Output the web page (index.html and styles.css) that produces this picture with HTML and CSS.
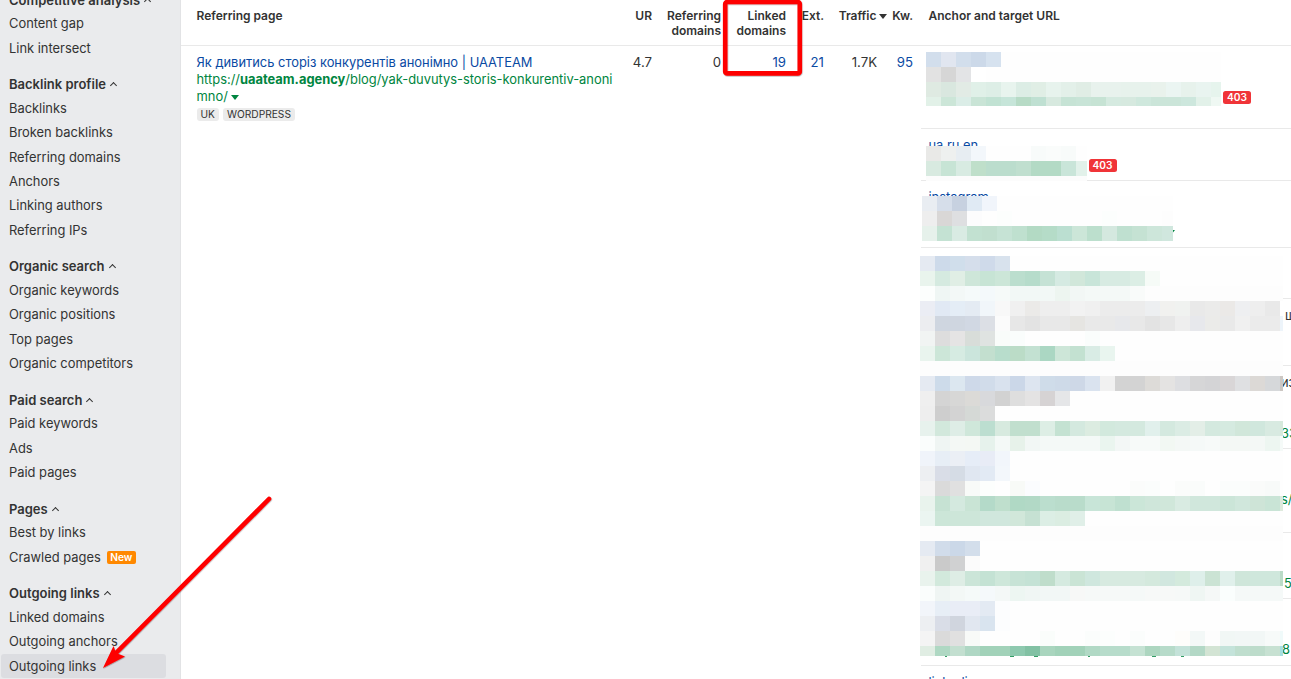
FILE: index.html
```html
<!DOCTYPE html>
<html lang="en">
<head>
    <meta charset="UTF-8">
    <meta name="viewport" content="width=device-width, initial-scale=1.0">
    <title>Outgoing links</title>
    <link rel="stylesheet" href="styles.css">
</head>
<body>

<div class="layout">
    <nav class="sidebar">
        <div class="group">
            <h4>Competitive analysis <i class="caret"></i></h4>
            <a>Content gap</a>
            <a>Link intersect</a>
        </div>
        <div class="group">
            <h4>Backlink profile <i class="caret"></i></h4>
            <a>Backlinks</a>
            <a>Broken backlinks</a>
            <a>Referring domains</a>
            <a>Anchors</a>
            <a>Linking authors</a>
            <a>Referring IPs</a>
        </div>
        <div class="group">
            <h4>Organic search <i class="caret"></i></h4>
            <a>Organic keywords</a>
            <a>Organic positions</a>
            <a>Top pages</a>
            <a>Organic competitors</a>
        </div>
        <div class="group">
            <h4>Paid search <i class="caret"></i></h4>
            <a>Paid keywords</a>
            <a>Ads</a>
            <a>Paid pages</a>
        </div>
        <div class="group">
            <h4>Pages <i class="caret"></i></h4>
            <a>Best by links</a>
            <a>Crawled pages <span class="new">New</span></a>
        </div>
        <div class="group">
            <h4>Outgoing links <i class="caret"></i></h4>
            <a>Linked domains</a>
            <a>Outgoing anchors</a>
            <a class="active">Outgoing links</a>
        </div>
    </nav>

    <main class="report">
        <div class="row head">
            <div class="page">Referring page</div>
            <div>UR</div>
            <div>Referring<br>domains</div>
            <div>Linked<br>domains</div>
            <div>Ext.</div>
            <div class="sorted">Traffic <i class="down"></i></div>
            <div>Kw.</div>
            <div class="anchor">Anchor and target URL</div>
        </div>
        <div class="row body">
            <div class="page">
                <div class="title">Як дивитись сторіз конкурентів анонімно | UAATEAM</div>
                <div class="url">https://<b>uaateam.agency</b>/blog/yak-duvutys-storis-konkurentiv-anoni<br>mno/ <i class="down green"></i></div>
                <div class="tags"><span>UK</span><span>WORDPRESS</span></div>
            </div>
            <div>4.7</div>
            <div>0</div>
            <div class="link">19</div>
            <div class="link">21</div>
            <div class="traffic">1.7K</div>
            <div class="link">95</div>
            <div class="targets">
                <div class="target t1"><span class="code">403</span></div>
                <div class="target t2"><span class="link">ua ru en</span><span class="code">403</span></div>
                <div class="target t3"><span class="link">instagram</span><i class="down green"></i></div>
                <div class="target t4"></div>
                <div class="target t5"><span class="tail">ш</span></div>
                <div class="target t6"><span class="tail">из</span><span class="tail url">33</span></div>
                <div class="target t7"><span class="tail url">s/</span></div>
                <div class="target t8"><span class="tail url">5</span></div>
                <div class="target t9"><span class="tail url">8</span></div>
                <div class="target t10"><span class="link">linkedin</span></div>
            </div>
        </div>
    </main>
</div>

<!-- hidden anchors and urls -->
<div class="mosaic m1" id="m1"></div>
<div class="mosaic m2" id="m2"></div>
<div class="mosaic m3" id="m3"></div>
<div class="mosaic m4" id="m4"></div>

<!-- annotations -->
<svg class="notes" width="1291" height="679" viewBox="0 0 1291 679">
    <defs>
        <filter id="shade" x="-5%" y="-5%" width="110%" height="110%">
            <feDropShadow dx="0.4" dy="0.6" stdDeviation="0.6" flood-color="#000" flood-opacity="0.4"/>
        </filter>
    </defs>
    <!-- letter tails left under the cover -->
    <path d="M945 656.5h2M1010 656.5h4M1034 656.5h4M1088 656.5h2M1152 656.5h4M1181 656.5h3" stroke="#008540" stroke-opacity="0.8"/>
    <g filter="url(#shade)">
        <rect x="725.2" y="2" width="74.6" height="71.4" rx="2" fill="none" stroke="#fe0606" stroke-width="4.6"/>
        <path d="M269 499 L115 654" fill="none" stroke="#fe0606" stroke-width="4.6" stroke-linecap="round"/>
        <path d="M103 668 L113.5 646 L116 653 L125 656.5 Z" fill="#fe0606"/>
    </g>
</svg>

<script src="mosaic.js"></script>
</body>
</html>
```

FILE: styles.css
```css
* {
    box-sizing: border-box;
}
body {
    margin: 0;
    width: 1291px;
    height: 679px;
    overflow: hidden;
    position: relative;
    background: #fff;
    color: #333;
    font-family: Inter, "Liberation Sans", sans-serif;
    font-size: 13.2px;
}
.layout {
    display: flex;
    height: 679px;
    overflow: hidden;
}

/* sidebar */
.sidebar {
    flex: 0 0 181px;
    background: #eaebed;
    border-right: 1px solid #e2e3e5;
    margin-top: -12.5px;
    height: 692px;
    overflow: hidden;
}
.group {
    margin-bottom: 11.67px;
}
.group h4,
.group a {
    display: flex;
    align-items: center;
    height: 24.33px;
    margin: 0 14px 0 1px;
    padding-left: 8px;
    font-size: 12.9px;
    white-space: nowrap;
}
.group h4 {
    font-size: 13px;
    font-weight: 600;
}
.group a.active {
    background: #dcdde1;
    border-radius: 3px;
}
.caret {
    width: 5px;
    height: 5px;
    margin: 3px 0 0 5px;
    border: solid #333;
    border-width: 1.3px 0 0 1.3px;
    transform: rotate(45deg);
}
.new {
    margin-left: 6px;
    padding: 0 3.5px;
    height: 13px;
    line-height: 12px;
    border-radius: 2px;
    background: #ff8800;
    color: #fff;
    font-size: 10.2px;
    font-weight: 600;
}

/* table */
.report {
    flex: 1;
    min-width: 0;
}
.row {
    display: grid;
    grid-template-columns: 431px 40px 69px 65px 38px 63px 26px 1fr;
    text-align: right;
}
.head {
    height: 46px;
    padding-top: 8px;
    border-bottom: 1px solid #e9e9e9;
    font-size: 12px;
    font-weight: 600;
    line-height: 15px;
}
.body {
    line-height: 17px;
}
.body > div {
    padding-top: 8px;
}
.row .page {
    padding-left: 15.5px;
    text-align: left;
    white-space: nowrap;
}
.body .page {
    font-size: 12.9px;
}
.row .anchor {
    padding-left: 15.5px;
    text-align: left;
}
.row .traffic {
    padding-right: 10px;
}
.down {
    display: inline-block;
    border: 3.5px solid transparent;
    border-top: 5px solid #333;
    border-bottom: 0;
    vertical-align: 1.5px;
}
.sorted {
    white-space: nowrap;
}
.sorted .down {
    border-left-width: 4px;
    border-right-width: 4px;
    margin-left: -0.5px;
}
.down.green {
    border-top-color: #008540;
    border-left-width: 4px;
    border-right-width: 4px;
}
.title,
.link {
    color: #0a4aa3;
}
.url {
    color: #008540;
}
.tags {
    display: flex;
    gap: 4px;
    padding-top: 3px;
}
.tags span {
    height: 13px;
    padding: 0 4px;
    border-radius: 3px;
    background: #ebebeb;
    font-size: 10.2px;
    line-height: 13px;
}

/* anchor and target list */
.row .targets {
    margin-left: 8px;
    padding-top: 0;
    text-align: left;
}
.target {
    display: flex;
    padding: 8px 0 0 7.5px;
    border-bottom: 1px solid #e9e9e9;
    font-size: 12.9px;
}
.t1 { height: 83px; padding: 45px 0 0 302px; }
.t2 { height: 52px; }
.t3 { height: 67px; }
.t4 { height: 51px; }
.t5 { height: 67px; }
.t6 { height: 83px; }
.t7 { height: 84px; }
.t8 { height: 66px; }
.t9 { height: 67px; }
.t10 { border: 0; }
.code {
    height: 13px;
    padding: 0 4px;
    border-radius: 2.5px;
    background: #f03438;
    color: #fff;
    font-size: 10.2px;
    font-weight: 600;
    line-height: 13px;
}
.t2 .link {
    width: 160px;
}
.t2 .code {
    margin-top: 22px;
}
.t3 .link {
    width: 238px;
}
.t3 .down {
    height: 5px;
    margin: 41px 0 0 0.5px;
}
.t5, .t6, .t7, .t8, .t9 {
    flex-direction: column;
    padding-left: 360px;
}
.t5 { padding-left: 364px; }
.t6 .url { margin-top: 34px; }
.t7 .url,
.t8 .url,
.t9 .url { margin-top: 34px; }
.t8 { padding-left: 363px; }
.t9 { padding-left: 361px; }

/* pixelated cover over the list */
.mosaic {
    position: absolute;
    overflow: hidden;
    background: #fefefe;
}
.m1 { left: 926px; top: 52px; width: 295px; height: 54px; }
.m2 { left: 926px; top: 146px; width: 161px; height: 35px; }
.m3 { left: 922px; top: 196px; width: 251px; height: 45px; }
.m4 { left: 920px; top: 256px; width: 363px; height: 400px; }
.strip {
    display: flex;
    height: 15px;
}
.strip span {
    flex: 0 0 15px;
}
.notes {
    position: absolute;
    left: 0;
    top: 0;
}
```

FILE: mosaic.js
```javascript
// one string per 15px strip, one colour per 15px cell, "-" is an empty cell,
// "*n" repeats the previous colour up to n cells
const covers = {
    m1: [
        "d2deec e1e6f0 d2deec ccd9e9 d6e2ef",
        "e2e2e2 d6d6d6 e3e4e6 ffffff",
        "dfeae2 d9e7df e2ebe5 e0f0e8 ddeee6 e8f4ee dcede5 e0eee5 e7f3ed e3f0e9 e0ede5 e8f2ed*2 e7f2ec*2 e9f2ec ebf5f2 e7f2ec e9f4f0 e6f4ed",
        "e2f1e8 cce6d8 dbede7 c9e4d6 c1e2d3 c6e5d9 b7dbc6 bfe0d2 d7e9df c6e3d5 c8e4d7 c6e3d4 d5eae0 d6e9df cfe8dd cbe5d9*2 cde7dd e2f1e9 eff8f3"
    ],
    m2: [
        "e9e9e7 eef0ef e7edf2 f3f7fb fefefe - - f8fbfa fafcfb f8fbfa",
        "d8eae0 c7e4d5 d8ebe2 bfdfca bbddcd*2 c0dfcf b3dac5*2 c9e5d9 e2f1ea",
        "fcfcfc*11"
    ],
    m3: [
        "e9edf2 d6deea c7d1e0 e0eaf4 f1f5fb",
        "eeeeee d9d7d6 dedfe1 fcfcfd - fcfefd - - - - - - fcfefd - - - fdfdfd",
        "e6f1eb c4e2d3 d9ebe3 c2e1d1 c1dfcf c6e3d5 bfe0cf b3dac4 b5dcc8 bbdfd1 cce6d8 bcdfcd d4e8df bfe0d0 c5e2d3 cde6da d0e7de"
    ],
    m4: [
        "e5eaf2 cddaea d0deeb d5deeb cfdaea d8e2ed",
        "e9f4ed d5eae0 e0eee5 cee6d9 c7e4d5 cce6d8 bbdece b6dccb c5e2d5 d5eae2 d1e7da c8e5d9 d7ebe2*2 dceee5 f6fbf7",
        "fcfefd eff6f4 f3f8f7 f5fafa f4f9fb f6faf9 f2f8f6*3 edf5f0 f2f7f5 f4f9f7*3 f9fbfa fdfdfd*10",
        "ebedf4 e1e9f4 e4edf6 e4ebf3 f1f6fa f8f8f8 f0f0f0 ebeae8 eeeeee*2 f2f2f2 f0f0f0 ececec*3 edeff1 f1f1ef f0f2f0 e9e9e9 ebebea ebe9e7 eeeff1 eeeeee e9e9e9 ffffff",
        "ecedf0 cfd6e0*2 d1d8e3 dcdfe5 fbfbfb e7e7e7 e3e3e3 e8e8e8*2 e6e5e2 e9e9e9*2 e7e8eb e8e8e8 e3e3e3 e7e7e7 eeeeee e7e8ec ebebe9 e9e9e9 f0f0f0 ebebeb*2 edf4fa",
        "f1f4f3 dddddd e5e4e4 d8ddd9 dfe3e1 f9fcfa fafdfc - - - - fafdfc",
        "e9f4ee cce6d8 d6ebe2 cbe5dc c3dfcf b8ddcc bbdcc7 c3e1d2 abd7c3 cde6d8 c3e1d1 d9ece5 e9f5ef",
        "fdfdfd*25",
        "e5eaf2 cddbea dce7f0 ced9e9 d1dcea d9e2ee cbd7e8 dde5f0 cfdce9 cedae8 ced8e7 dae3ef f1f1f1 d3d3d3*2 dddbd8 e4e3e2 dddee1 d6d6d7 d4d4d6 d9d6d7 dfe0e2 dcd9d6 d6d8da ccc7c3",
        "efefef d4d4d4 d7d7d6 dbdad7 d8d9dc d2d2d2 dedede e4e3e3 d6d3d4 e5e6e8",
        "eeeeee cecece d3d3d3 d5d9d6 dbdcdc",
        "e7f2ed d2e8dc deede6 cfe7da bcded0 d7eadf c1dfce*2 ddeee5 c4e2d2 d4e9df dcece1 d2e9dd d4e9df*2 e1f0ec d4e9df dbece4 e3eee7 d4e9df d5eae0 d1e7da d0e7dd d8eae1 d6e9dc",
        "fafdfc eff5f3 f4f8f5 f4f8f4 e6f2ec f4f9f7 e7f2ea f2f7f5 f4f9f7*4 eaf5ef f3f7f6 f7faf9*2 f2f8f3 f4f8f6 f5f9f8 f7faf9 f4f8f5*2 f4f8f6 edf6f1 f5faf8",
        "f0f4fa e7eef6 ebeff5 e6edf7 e8ecf6 f2f6fb",
        "edeff2 d9dde7 d5dce5 e0e7f1 e2eaf4 f3f7fb",
        "f4f4f4 dadada e0e0e0 f8faf8 fcfefd - f8faf7 fbfcfe - - - - - - fbfcfb fbfdfc - fbfcfb fafcfb - fbfdfc*2 fafbfa f8faf9",
        "e9f3ed c6e2d3 d4e9df c9e4d5 b4dac9 bfdfcd b0d9c5 b2d9c6 bbdece b9dccb b9dccb c8e5d8 c7e4d5 bfe0d0 cbe6d8 cfe6da d0e7da d9ebe2 d0e7dc*2 cbe5d8 d0e7dc cee4d7 c9e4d6 deeadd",
        "ebf5f1 cce6d8 cde6d9*2 d0e7dd*2 d1e7da c6e1d3 dceee5 dbede2 e0efe8",
        "fdfdfd*25",
        "e5eaf2 d1dcea cbd8e8 d3deeb",
        "f0f0f0 cacaca d0d1d2 fbfbfb",
        "e9f3ed d2e9dc deede5 cbe5d8 c4e2d4 cee7da c7e3d6 c4e2d5 bfddcb d5eae0 cae4d5 cfe7de d7eae0*3 d4e9dd d1e7df d4eadd deefea cbe3d4 e0f0eb cfe6da cfe7dc*2 badbc7",
        "fafdfc eff5f3 f3f8f6 f5faf9 f5f9fb f4f8f7 edf6f2 f0f6f4 f2f7f6*2 f7f8f7 f6f9f8*3 f5f9f8 f7f9f8*2 f6f9f8 eff6f3 f5f8f7 fafefd f5f9f8*4",
        "f2f5fa e7eef6 e9edf6 e9edf6 e3eaf3 fcfdfe",
        "edeff2 d9dde7 d0d5de e1e7f0 d9e4ef fcfdfe",
        "f4f4f4 dadada e0e0e0 f8faf8 - - - - fafdfb - - fbfdfc fcfefd - fbfdfc - - fefdfb f3f8f7 fdfdfd f1f7f5 f2f7f6*2 f7faf9 f0fafa",
        "e0ede3 afd8c3 c3dfd0 afd7c4 a2d2b9*2 8ec9af 82c1a4 a9d5be a2d2b9*2 b1d9c5 b7dccb*2 c5e2d3 add6c0 b7dbca c4e2d9 b3d8c6 d3e4d4 c4e3da bfdece bddccb c7e1d2 a6dfe0"
    ]
};

for (const id in covers) {
    const box = document.getElementById(id);
    covers[id].forEach(line => {
        const strip = document.createElement("div");
        strip.className = "strip";
        line.split(" ").forEach(item => {
            const [color, count] = item.split("*");
            for (let i = 0; i < (count || 1); i++) {
                const cell = document.createElement("span");
                if (color !== "-") cell.style.background = "#" + color;
                strip.appendChild(cell);
            }
        });
        box.appendChild(strip);
    });
}
```
